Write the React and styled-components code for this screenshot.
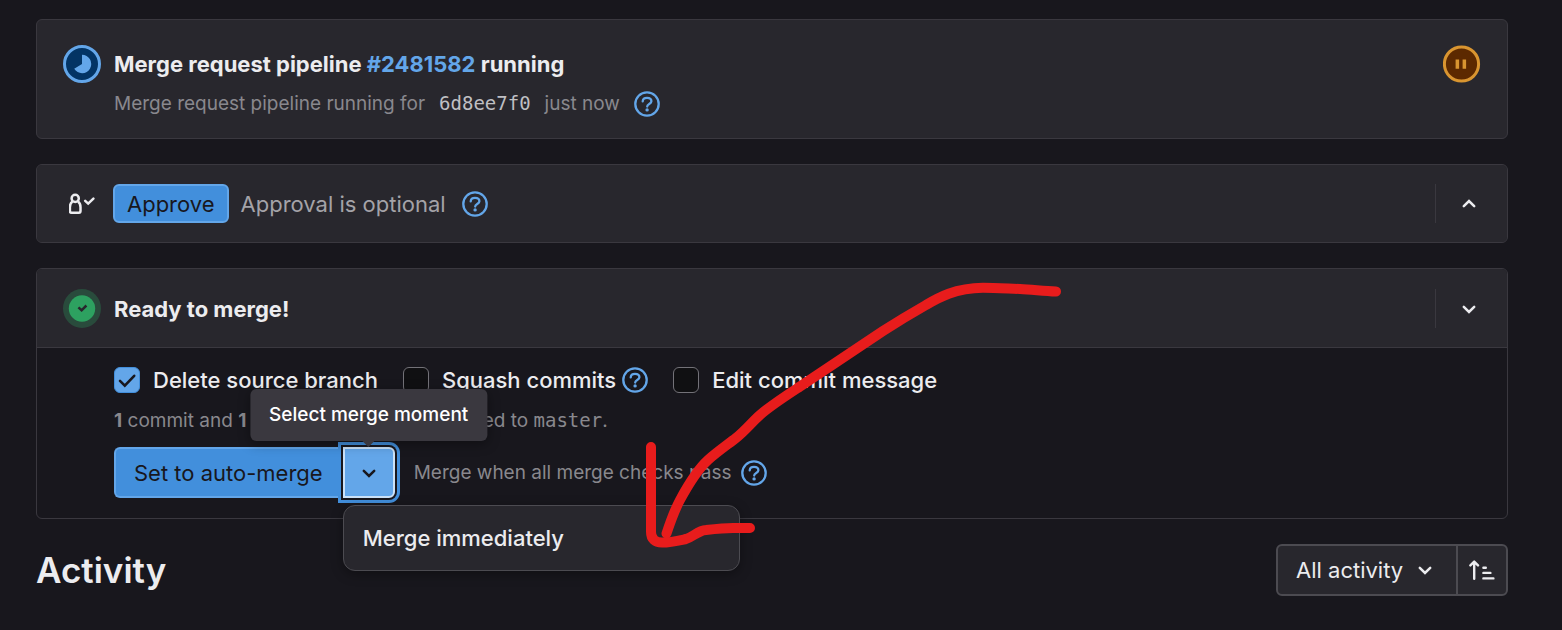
import React from "react";
import styled, { createGlobalStyle } from "styled-components";

const GlobalStyle = createGlobalStyle`
  * {
    box-sizing: border-box;
  }

  body {
    margin: 0;
    background: #18171d;
    color: #ececef;
    font-family: "Inter", "Liberation Sans", sans-serif;
    font-size: 22px;
    line-height: 28px;
  }

  button,
  select,
  input {
    margin: 0;
    font: inherit;
    color: inherit;
  }
`;

const Page = styled.main`
  position: relative;
  display: flex;
  flex-direction: column;
  gap: 25px;
  padding: 19px 54px 34px 36px;
`;

const Card = styled.section`
  border: 1px solid #3a383f;
  border-radius: 6px;
  background: ${(props) => (props.$plain ? "transparent" : "#28272d")};
`;

const PipelineRow = styled.div`
  display: flex;
  align-items: flex-start;
  gap: 13px;
  padding: 25px 26px 21px;
`;

const PipelineText = styled.div`
  display: flex;
  flex: 1;
  flex-direction: column;
  gap: 7px;
`;

const Title = styled.h2`
  flex: 1;
  margin: 0;
  font-size: 22px;
  font-weight: 700;
  line-height: 38px;
`;

const PipelineLink = styled.a`
  color: #63a6e9;
  text-decoration: none;
`;

const Subtle = styled.p`
  display: flex;
  align-items: center;
  gap: ${(props) => props.$gap || 0}px;
  margin: 0;
  color: #89888d;
  font-size: 19px;
  line-height: 26px;
`;

const Mono = styled.code`
  font-family: "DejaVu Sans Mono", monospace;
  font-size: 19px;
`;

const CommitLink = styled.a`
  color: #bfbfc3;
  text-decoration: none;
`;

const CardHeader = styled.header`
  display: flex;
  align-items: center;
  gap: ${(props) => (props.$divided ? 13 : 12)}px;
  padding: ${(props) => (props.$divided ? "20px 25px 19px 26px" : "19px 25px 19px 26px")};
  border-bottom: ${(props) => (props.$divided ? "1px solid #3a383f" : "0")};
  border-radius: ${(props) => (props.$divided ? "5px 5px 0 0" : "5px")};
  background: #28272d;
`;

const IconSlot = styled.span`
  display: flex;
  flex: none;
  justify-content: center;
  width: 38px;
`;

const HeaderText = styled.span`
  display: flex;
  flex: 1;
  align-items: center;
  gap: 16px;
  color: #a4a3a8;
`;

const ApproveButton = styled.button`
  height: 39px;
  padding: 0 12px;
  border: 2px solid #63a6e9;
  border-radius: 6px;
  background: #428fdc;
  color: #18171d;
`;

const ToggleArea = styled.div`
  display: flex;
  align-items: center;
  height: 39px;
  padding-left: 20px;
  border-left: 1px solid #3a383f;
`;

const IconButton = styled.button`
  display: flex;
  padding: 0;
  border: 0;
  background: none;
`;

const HelpButton = styled(IconButton)`
  color: #63a6e9;
`;

const MergeBody = styled.div`
  padding: 18px 26px 20px 77px;
`;

const Options = styled.div`
  display: flex;
  align-items: center;
  gap: 25px;
  margin-bottom: 13px;
`;

const Option = styled.div`
  display: flex;
  align-items: center;
  gap: 6px;
`;

const CheckLabel = styled.label`
  display: flex;
  align-items: center;
  gap: 13px;
  font-weight: 500;
`;

const CheckBox = styled.span`
  display: grid;
  width: 26px;
  height: 26px;

  > * {
    grid-area: 1 / 1;
  }

  svg {
    pointer-events: none;
  }
`;

const CheckInput = styled.input`
  appearance: none;
  width: 26px;
  height: 26px;
  border: 1px solid #737278;
  border-radius: 6px;
  background: #101012;

  &:checked {
    border-color: #428fdc;
    background: #63a6e9;
  }

  & + svg {
    visibility: hidden;
  }

  &:checked + svg {
    visibility: visible;
  }
`;

const MergeActions = styled.div`
  display: flex;
  align-items: center;
  gap: 19px;
  margin-top: 13px;
`;

const SplitButton = styled.div`
  display: flex;
`;

const MergeButton = styled.button`
  height: 51px;
  padding: 0 20px 0 18px;
  border: 2px solid #63a6e9;
  border-right: 0;
  border-radius: 6px 0 0 6px;
  background: #428fdc;
  color: #18171d;
`;

const CaretWrap = styled.div`
  position: relative;
`;

const CaretButton = styled.button`
  display: flex;
  align-items: center;
  justify-content: center;
  width: 52px;
  height: 51px;
  padding: 0;
  border: 2px solid #cbe2f9;
  border-radius: 0 6px 6px 0;
  background: #63a6e9;
  color: #18171d;
  box-shadow: 0 0 0 2px #18171d, 0 0 0 5px #428fdc;
`;

const Tooltip = styled.div`
  position: absolute;
  bottom: 57px;
  left: 50%;
  z-index: 3;
  padding: 13px 19px;
  border-radius: 6px;
  background: #3a383f;
  box-shadow: 0 3px 12px rgba(0, 0, 0, 0.35);
  color: #fff;
  font-size: 19px;
  font-weight: 500;
  line-height: 26px;
  white-space: nowrap;
  transform: translateX(-50%);

  &::after {
    content: "";
    position: absolute;
    top: 100%;
    left: 50%;
    margin-left: -6px;
    border: 6px solid transparent;
    border-top-color: #3a383f;
    border-bottom: 0;
  }
`;

const Menu = styled.div`
  position: absolute;
  top: 58px;
  left: 0;
  z-index: 2;
  width: 397px;
  padding: 6px;
  border: 1px solid #4c4b51;
  border-radius: 12px;
  background: #28272d;
  box-shadow: 0 3px 12px rgba(0, 0, 0, 0.35);
`;

const MenuItem = styled.button`
  display: block;
  width: 100%;
  padding: 12px 13px;
  border: 0;
  background: none;
  font-weight: 500;
  line-height: 28px;
  text-align: left;
`;

const ActivityBar = styled.div`
  display: flex;
  align-items: center;
  justify-content: space-between;
`;

const ActivityTitle = styled.h1`
  margin: 0;
  font-size: 35px;
  font-weight: 600;
  line-height: 44px;
`;

const Filters = styled.div`
  display: flex;
  border: 2px solid #4c4b51;
  border-radius: 6px;
  background: #28272d;
`;

const SelectWrap = styled.div`
  display: grid;
  align-items: center;

  > * {
    grid-area: 1 / 1;
  }

  svg {
    justify-self: end;
    margin-right: 18px;
    pointer-events: none;
  }
`;

const ActivitySelect = styled.select`
  appearance: none;
  height: 48px;
  padding: 0 52px 0 18px;
  border: 0;
  background: none;
`;

const SortButton = styled.button`
  display: flex;
  align-items: center;
  justify-content: center;
  width: 50px;
  padding: 0;
  border: 0;
  border-left: 2px solid #4c4b51;
  background: none;
`;

const Scribble = styled.svg`
  position: absolute;
  top: 0;
  left: 0;
  z-index: 4;
  pointer-events: none;
`;

const RunningIcon = () => (
  <svg width="38" height="38" viewBox="0 0 38 38" aria-hidden="true">
    <circle cx="19" cy="19" r="17.5" fill="#033464" stroke="#63a6e9" strokeWidth="3" />
    <path d="M19 19V9.8A9.2 9.2 0 1 1 11.2 23.8Z" fill="#63a6e9" />
  </svg>
);

const PausedIcon = () => (
  <svg width="38" height="38" viewBox="0 0 38 38" aria-hidden="true">
    <circle cx="18.5" cy="19" r="17.1" fill="#5c2900" stroke="#d99530" strokeWidth="3" />
    <path d="M12.6 14.6h3.5v9.2h-3.5zM19.6 14.6h3.5v9.2h-3.5z" fill="#d99530" />
  </svg>
);

const SuccessIcon = () => (
  <svg width="38" height="39" viewBox="0 0 38 39" aria-hidden="true">
    <ellipse cx="19" cy="19.5" rx="19" ry="19.5" fill="#294b3c" />
    <circle cx="19" cy="19.5" r="13.2" fill="#2da160" />
    <path d="M15.4 18.4l3.2 2.9 4.8-4.8" fill="none" stroke="#28272d" strokeWidth="2.5" />
  </svg>
);

const ApprovalIcon = () => (
  <svg width="26" height="26" viewBox="0 0 26 26" fill="none" stroke="#ececef" strokeWidth="2.5" aria-hidden="true">
    <circle cx="6.2" cy="7.4" r="3.6" />
    <path d="M3.4 10.6C1.6 11.9 .9 13.9 .9 16.3v3.7c0 1 .6 1.7 1.6 1.7h7.4c1 0 1.6-.7 1.6-1.7v-3.7c0-2.4-.7-4.4-2.5-5.7" />
    <path d="M16.2 9.8l3 2.8 5.2-5" strokeLinecap="round" />
  </svg>
);

const HelpIcon = () => (
  <svg width="26" height="26" viewBox="0 0 26 26" fill="none" stroke="currentColor" strokeWidth="2.3" aria-hidden="true">
    <circle cx="13" cy="13" r="11.7" />
    <path d="M8.7 10.3C8.9 8.1 10.7 6.9 13 6.9c2.6 0 4.4 1.4 4.4 3.4 0 2.8-4.2 2.7-4.2 5.3" strokeLinecap="round" />
    <circle cx="13.1" cy="18.9" r="1.7" fill="currentColor" stroke="none" />
  </svg>
);

const Chevron = ({ up }) => (
  <svg width="26" height="26" viewBox="0 0 26 26" fill="none" stroke="currentColor" strokeWidth="2.5" strokeLinecap="round" aria-hidden="true">
    <path d={up ? "M7.8 15.2L13 10l5.2 5.2" : "M7.8 10.8L13 16l5.2-5.2"} />
  </svg>
);

const SortIcon = () => (
  <svg width="26" height="26" viewBox="0 0 26 26" fill="none" stroke="#ececef" strokeWidth="2.4" strokeLinecap="round" aria-hidden="true">
    <path d="M5.2 21.8V4.6M1.4 8.4l3.8-3.8L9 8.4" strokeLinejoin="round" />
    <path d="M14.4 10.7h2.4M14.4 15.9h7M14.4 21.4h10" />
  </svg>
);

const Help = ({ label }) => (
  <HelpButton type="button" aria-label={label}>
    <HelpIcon />
  </HelpButton>
);

const CheckOption = ({ id, label, checked, children }) => (
  <Option>
    <CheckLabel htmlFor={id}>
      <CheckBox>
        <CheckInput id={id} type="checkbox" defaultChecked={checked} />
        <svg width="26" height="26" viewBox="0 0 26 26" fill="none" stroke="#18171d" strokeWidth="2.6" aria-hidden="true">
          <path d="M6 13.8l4.8 4.8L20.2 8.8" strokeLinecap="round" />
        </svg>
      </CheckBox>
      {label}
    </CheckLabel>
    {children}
  </Option>
);

const App = () => {
  return (
    <>
      <GlobalStyle />
      <Page>
        <Card>
          <PipelineRow>
            <RunningIcon />
            <PipelineText>
              <Title>
                Merge request pipeline <PipelineLink href="#pipeline">#2481582</PipelineLink> running
              </Title>
              <Subtle $gap={14}>
                Merge request pipeline running for
                <CommitLink href="#commit">
                  <Mono>6d8ee7f0</Mono>
                </CommitLink>
                just now
                <Help label="Pipeline help" />
              </Subtle>
            </PipelineText>
            <IconButton type="button" aria-label="Pipeline stage">
              <PausedIcon />
            </IconButton>
          </PipelineRow>
        </Card>

        <Card>
          <CardHeader>
            <IconSlot>
              <ApprovalIcon />
            </IconSlot>
            <ApproveButton type="button">Approve</ApproveButton>
            <HeaderText>
              Approval is optional
              <Help label="Approval help" />
            </HeaderText>
            <ToggleArea>
              <IconButton type="button" aria-label="Collapse approvals">
                <Chevron up />
              </IconButton>
            </ToggleArea>
          </CardHeader>
        </Card>

        <Card $plain>
          <CardHeader $divided>
            <SuccessIcon />
            <Title>Ready to merge!</Title>
            <ToggleArea>
              <IconButton type="button" aria-label="Expand merge details">
                <Chevron />
              </IconButton>
            </ToggleArea>
          </CardHeader>
          <MergeBody>
            <Options>
              <CheckOption id="delete-branch" label="Delete source branch" checked />
              <CheckOption id="squash" label="Squash commits">
                <Help label="Squash help" />
              </CheckOption>
              <CheckOption id="edit-message" label="Edit commit message" />
            </Options>
            <Subtle as="div">
              <span>
                <strong>1</strong> commit and <strong>1</strong> merge commit will be added to <Mono>master</Mono>.
              </span>
            </Subtle>
            <MergeActions>
              <SplitButton>
                <MergeButton type="button">Set to auto-merge</MergeButton>
                <CaretWrap>
                  <CaretButton type="button" aria-label="Select merge moment">
                    <Chevron />
                  </CaretButton>
                  <Tooltip role="tooltip">Select merge moment</Tooltip>
                  <Menu>
                    <MenuItem type="button">Merge immediately</MenuItem>
                  </Menu>
                </CaretWrap>
              </SplitButton>
              <Subtle $gap={10}>
                Merge when all merge checks pass
                <Help label="Merge checks help" />
              </Subtle>
            </MergeActions>
          </MergeBody>
        </Card>

        <ActivityBar>
          <ActivityTitle>Activity</ActivityTitle>
          <Filters>
            <SelectWrap>
              <ActivitySelect aria-label="Activity filter">
                <option>All activity</option>
              </ActivitySelect>
              <Chevron />
            </SelectWrap>
            <SortButton type="button" aria-label="Sort direction">
              <SortIcon />
            </SortButton>
          </Filters>
        </ActivityBar>

        <Scribble width="1080" height="580" viewBox="0 0 1080 580" fill="none" stroke="#e81c1c" strokeWidth="10" strokeLinecap="round" strokeLinejoin="round" aria-hidden="true">
          <path d="M1056 291.5C1043 291 1032 289.5 1020 289C1008 288.6 995 287.8 983 287.8C955 288 938 298 926 305C912 313 897 322 883 331L800 386.5C784 397 770 406 760 415C752 422 745 431 736 438C727 445 717 452 708 460C697 470 687 487 680 500C674 511 670 523 666.5 533.5" />
          <path d="M651 447V532C651 539 655 542.5 662 542.5C671 542.5 679 540.5 686 539C693 537 698 530.5 706 530C715 529 724 528 733 528H750" />
        </Scribble>
      </Page>
    </>
  );
};

export default App;
